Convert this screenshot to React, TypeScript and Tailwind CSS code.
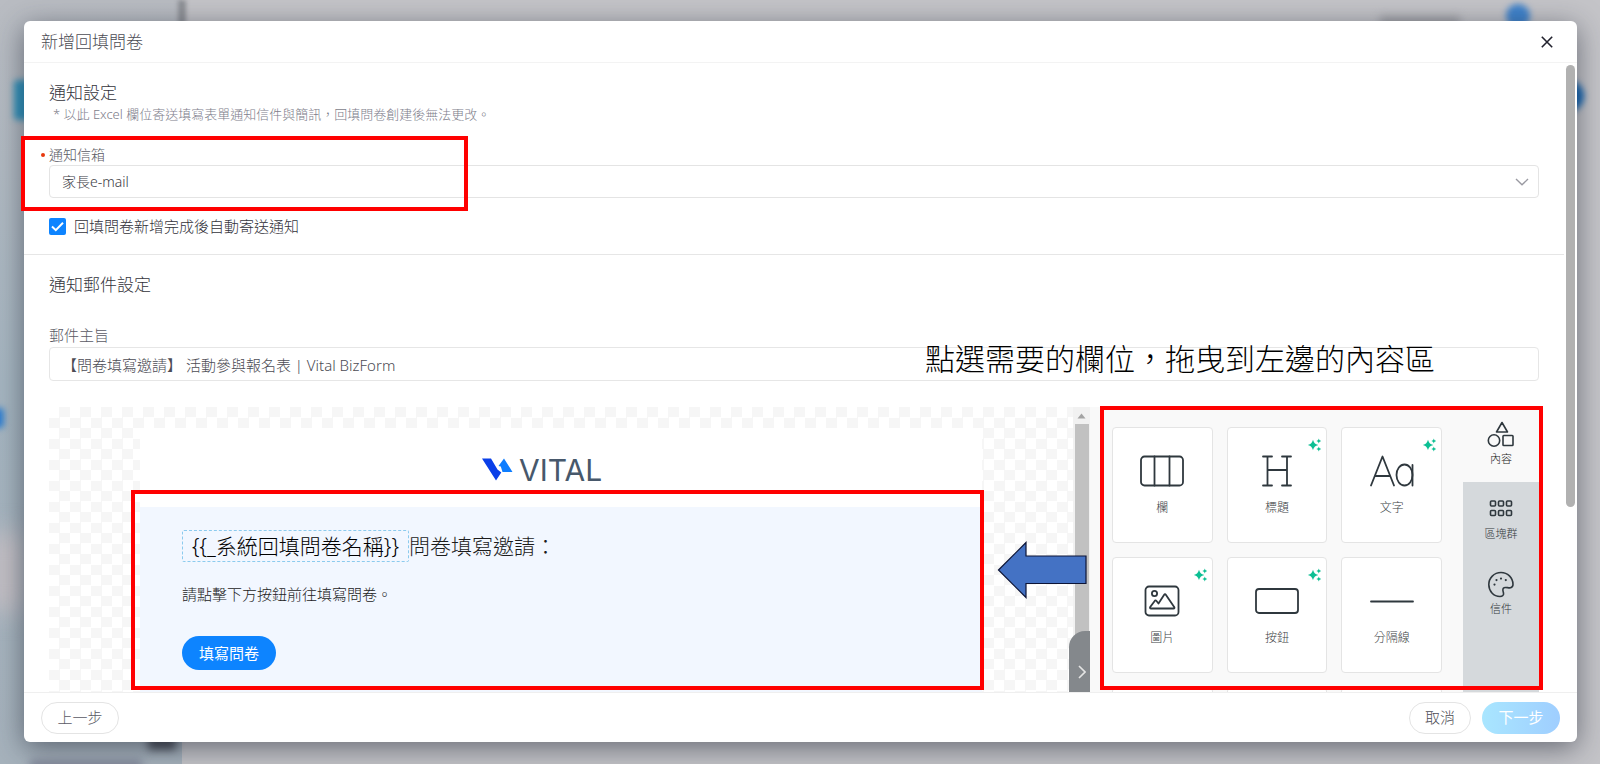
import { ReactNode } from "react";

const Sparkle = () => (
  <svg className="absolute right-1 top-2.5" width="14" height="14" viewBox="0 0 14 14" fill="#0bbf93">
    <path d="M5 1.8C6 5 7 6 10.2 7C7 8 6 9 5 12.2C4 9 3 8 0 7C3 6 4 5 5 1.8Z" />
    <path d="M10.8 0.6C11.300 2.2 11.700 2.600 13.200 3.100C11.700 3.600 11.300 4 10.800 5.600C10.300 4 9.900 3.600 8.400 3.100C9.900 2.600 10.300 2.200 10.800 0.600Z" />
    <path d="M10.8 8.400C11.300 10 11.700 10.400 13.200 10.900C11.700 11.400 11.300 11.800 10.800 13.400C10.300 11.800 9.900 11.400 8.400 10.900C9.900 10.400 10.300 10 10.800 8.400Z" />
  </svg>
);

const Icon = ({ children }: { children: ReactNode }) => (
  <svg width="46" height="34" viewBox="0 0 46 34" fill="none" stroke="#2f383e" strokeWidth="1.8" strokeLinecap="round" strokeLinejoin="round">
    {children}
  </svg>
);

const blocks = [
  {
    name: "欄",
    ai: false,
    icon: (
      <Icon>
        <rect x="2" y="2.5" width="42" height="29" rx="3.5" />
        <path d="M15.5 2.5V31.5M30.5 2.5V31.5" />
      </Icon>
    ),
  },
  {
    name: "標題",
    ai: true,
    icon: (
      <Icon>
        <path d="M9 2.5H18M28 2.5H37M9 31.5H18M28 31.5H37M13.5 2.5V31.5M33 2.5V31.5M13.5 16H33" />
      </Icon>
    ),
  },
  {
    name: "文字",
    ai: true,
    icon: (
      <Icon>
        <path d="M2 31.5L13.5 2.5L25 31.5M6 22H21" />
        <ellipse cx="35.5" cy="21" rx="8" ry="10.500" />
        <path d="M43.500 11V31.5" />
      </Icon>
    ),
  },
  {
    name: "圖片",
    ai: true,
    icon: (
      <Icon>
        <rect x="6.5" y="2.5" width="33" height="29" rx="3.5" />
        <circle cx="15.5" cy="9.5" r="2.6" />
        <path d="M12 24.5H34.5Q36 24.5 35.2 23L27 11Q26 9.5 25 11L19.5 19.5L17.5 17Q16.5 15.8 15.5 17.2L11.2 23Q10.5 24.5 12 24.5Z" />
      </Icon>
    ),
  },
  {
    name: "按鈕",
    ai: true,
    icon: (
      <Icon>
        <rect x="2" y="5" width="42" height="24" rx="3" />
      </Icon>
    ),
  },
  {
    name: "分隔線",
    ai: false,
    icon: (
      <Icon>
        <path d="M2 17.5H44" />
      </Icon>
    ),
  },
];

const tabs = [
  {
    name: "內容",
    icon: (
      <>
        <path d="M15 1.5L20.500 11H9.500Z" />
        <circle cx="7" cy="19.5" r="5.7" />
        <rect x="16" y="14.5" width="10" height="10" rx="0.8" />
      </>
    ),
  },
  {
    name: "區塊群",
    icon: (
      <>
        <rect x="3.5" y="5" width="5" height="5" rx="1" />
        <rect x="11.5" y="5" width="5" height="5" rx="1" />
        <rect x="19.5" y="5" width="5" height="5" rx="1" />
        <rect x="3.5" y="14.5" width="5" height="5" rx="1" />
        <rect x="11.5" y="14.5" width="5" height="5" rx="1" />
        <rect x="19.5" y="14.5" width="5" height="5" rx="1" />
      </>
    ),
  },
  {
    name: "信件",
    icon: (
      <>
        <path d="M26 13.5C26 6.5 20.5 1.5 14 1.5C7 1.5 1.8 7 1.8 13.5C1.8 20 6.5 25.5 13 25.5C15.5 25.5 17 24 16.5 22C15.8 19.5 15 17.5 17 16.7C19 15.8 21.5 17.3 23.5 16.8C25.2 16.3 26 15 26 13.5Z" />
        <path d="M7.5 13.5V13.6M9.5 9V9.1M14 7.5V7.6M18.8 9V9.1" strokeWidth="2.2" />
      </>
    ),
  },
];

// blurred page behind the dialog
const Backdrop = () => (
  <div className="absolute inset-0 overflow-hidden bg-[#c4c4c8]">
    <div className="absolute inset-y-0 left-0 w-[182px] bg-linear-to-b from-[#b9bcc2] via-[#a5b5c0] to-[#a6b2bc]" />
    <div className="absolute left-[178px] top-0 h-6 w-2 bg-[#8e9095] blur-[2px]" />
    <div className="absolute left-[14px] top-[80px] h-10 w-8 rounded bg-[#2f93bd] blur-[3px]" />
    <div className="absolute -left-3 top-[408px] h-5 w-4 rounded bg-[#2f7fd0] blur-[3px]" />
    <div className="absolute -left-3 top-[532px] h-20 w-9 bg-[#c4bfc4] blur-md" />
    <div className="absolute left-[148px] top-[734px] h-4 w-7 bg-[#4c505a] blur-xs" />
    <div className="absolute left-[30px] top-[760px] h-3 w-28 bg-[#82889a] blur-xs" />
    <div className="absolute right-[70px] top-1 size-6 rounded-full bg-[#3f83cc] blur-[3px]" />
    <div className="absolute right-[140px] top-4 h-4 w-20 bg-[#a0a1a6] blur-[4px]" />
    <div className="absolute right-4 top-[80px] size-8 rounded-full bg-[#1568b5] blur-[3px]" />
  </div>
);

const App = () => {
  return (
    <div className="relative h-screen pb-[22px] pl-6 pr-[23px] pt-[21px] font-['Noto_Sans','Noto_Sans_CJK_TC',sans-serif] text-[15px] font-light text-[#33333b]">
      <Backdrop />
      <div role="dialog" aria-label="新增回填問卷" className="relative flex h-full flex-col rounded-md bg-white shadow-[0_6px_28px_rgba(30,34,50,0.55)]">
        <header className="flex h-[42px] shrink-0 items-center justify-between border-b border-[#f3f3f3] pl-[17px] pr-[22px]">
          <h1 className="text-[17px] leading-6 text-[#4c4c54]">新增回填問卷</h1>
          <button type="button" aria-label="關閉" className="flex size-4 items-center justify-center">
            <svg width="12" height="12" viewBox="0 0 12 12" stroke="#22222e" strokeWidth="1.6">
              <path d="M0.8 0.8L11.2 11.2M11.2 0.8L0.8 11.2" />
            </svg>
          </button>
        </header>

        <div className="flex min-h-0 flex-1">
          <main className="flex min-w-0 flex-1 flex-col">
            <section className="border-b border-[#e6e6e6] px-[25px] pb-4 pt-[18px]">
              <h2 className="text-[17px] leading-6">通知設定</h2>
              <p className="pl-1 text-[13px] leading-[18px] text-[#7d7d8a]">* 以此 Excel 欄位寄送填寫表單通知信件與簡訊，回填問卷創建後無法更改。</p>
              <div className="relative mt-[22px]">
                <label htmlFor="mailbox" className="flex items-center text-[14px] leading-5 text-[#5a5a64]">
                  <span className="-ml-2 mr-1 size-1 rounded-full bg-[#e8380d]" />
                  通知信箱
                </label>
                <select id="mailbox" className="h-[33px] w-full appearance-none rounded border border-[#e4e4e4] bg-white pl-3 text-[14px] text-[#3b3b44]">
                  <option>家長e-mail</option>
                </select>
                <svg className="pointer-events-none absolute bottom-3 right-2.5" width="14" height="8" viewBox="0 0 14 8" fill="none" stroke="#9a9aa2" strokeWidth="1.4">
                  <path d="M1 1L7 6.8L13 1" />
                </svg>
                <div className="pointer-events-none absolute -left-7 -top-[9px] h-[75px] w-[447px] border-4 border-[#ff0000]" />
              </div>
              <label className="mt-4 flex items-center gap-2 text-[15px] leading-6">
                <span className="relative flex size-[17px]">
                  <input type="checkbox" defaultChecked className="size-[17px] appearance-none rounded-xs bg-[#0d84ff]" />
                  <svg className="pointer-events-none absolute inset-0" width="17" height="17" viewBox="0 0 17 17" fill="none" stroke="white" strokeWidth="2">
                    <path d="M3 8.5L6.8 12.2L14 4.8" />
                  </svg>
                </span>
                回填問卷新增完成後自動寄送通知
              </label>
            </section>

            <section className="flex min-h-0 flex-1 flex-col px-[25px] pt-[18px]">
              <h2 className="text-[17px] leading-6">通知郵件設定</h2>
              <div className="relative mt-[26px] shrink-0">
                <label htmlFor="subject" className="block leading-6 text-[#5a5a64]">郵件主旨</label>
                <input
                  id="subject"
                  type="text"
                  defaultValue="【問卷填寫邀請】 活動參與報名表 | Vital BizForm"
                  className="h-[34px] w-full rounded border border-[#e6e6e6] px-3 text-[15px] text-[#4c4c54]"
                />
                <p className="pointer-events-none absolute right-[104px] top-4 text-[30px] leading-10 text-black">點選需要的欄位，拖曳到左邊的內容區</p>
              </div>

              <div className="relative mt-[26px] flex min-h-0 flex-1">
                {/* mail preview */}
                <div className="relative flex min-w-0 flex-1">
                  <div className="flex min-w-0 flex-1 flex-col bg-[conic-gradient(#f6f6f6_25%,#fff_0_50%,#f6f6f6_0_75%,#fff_0)] bg-size-[21px_21px] px-[91px] pt-[21px]">
                    <div className="relative flex min-h-0 flex-1 flex-col bg-white">
                      <div className="flex h-[79px] shrink-0 items-center justify-center gap-1.5 pb-5 pr-5 pt-6">
                        <svg width="31" height="23" viewBox="0 0 31 23">
                          <path d="M0 0.5H9L15.5 11.5L19.3 14.5L14 22.5Z" fill="#0a3fe8" />
                          <path d="M16.5 8L22 0.5L30.5 14H20.5L18.8 8.5Z" fill="#0d7dff" />
                        </svg>
                        <span className="w-[101px] font-['Inter',sans-serif] text-[30px] font-normal leading-8 text-[#47586b]">VITAL</span>
                      </div>
                      <div className="min-h-0 flex-1 bg-[#f2f7ff] pl-[42px] pt-[23px] text-[#1c1c1c]">
                        <p className="flex items-center text-[21px] leading-7">
                          <span className="rounded-xs border border-dashed border-[#8ccbee] px-[9px] py-px text-black">{"{{_系統回填問卷名稱}}"}</span>
                          問卷填寫邀請：
                        </p>
                        <p className="mt-5 leading-6">請點擊下方按鈕前往填寫問卷。</p>
                        <button type="button" className="mt-[30px] h-[34px] rounded-full bg-[#0d84ff] px-[17px] font-normal text-white">填寫問卷</button>
                      </div>
                      <div className="pointer-events-none absolute -left-[9px] -right-[2px] bottom-[2px] top-[62px] border-4 border-[#ff0000]" />
                    </div>
                  </div>
                  <div className="flex w-[17px] flex-col items-center bg-[#f1f1f1]">
                    <svg className="my-[5px]" width="9" height="7" viewBox="0 0 9 7" fill="#a3a3a3">
                      <path d="M0.5 6.5L4.5 1.5L8.5 6.5Z" />
                    </svg>
                    <div className="w-3.5 flex-1 bg-[#c1c1c1]" />
                  </div>
                  <button type="button" aria-label="收合" className="absolute bottom-0 right-0 flex h-[61px] w-[21px] items-center justify-end rounded-tl-2xl bg-[#84888c] pr-1 pt-5">
                    <svg width="8" height="14" viewBox="0 0 8 14" fill="none" stroke="#e4e4e4" strokeWidth="1.6">
                      <path d="M1 1L7 7L1 13" />
                    </svg>
                  </button>
                  <svg className="pointer-events-none absolute bottom-[93px] right-[3px]" width="90" height="58" viewBox="0 0 90 58">
                    <path d="M1.5 29L29 1.5V15H89V42.5H29V56.5Z" fill="#4472c4" stroke="#0c1436" strokeWidth="1.2" />
                  </svg>
                </div>

                {/* block picker */}
                <div className="flex min-h-0 w-[449px] bg-[#f9f9f9]">
                  <div className="grid flex-1 grid-cols-3 content-start gap-3.5 overflow-hidden pl-[22px] pr-[21px] pt-5">
                    {blocks.map((block) => (
                      <button key={block.name} type="button" className="relative flex h-[116px] flex-col items-center gap-2.5 rounded border border-[#e4e4e4] bg-white pt-[26px] text-[12px] leading-5 text-[#3c4245]">
                        {block.icon}
                        {block.name}
                        {block.ai && <Sparkle />}
                      </button>
                    ))}
                    <div className="h-4 rounded-t border border-[#e4e4e4] bg-white" />
                    <div className="h-4 rounded-t border border-[#e4e4e4] bg-white" />
                    <div className="h-4 rounded-t border border-[#e4e4e4] bg-white" />
                  </div>
                  <div className="flex w-[76px] flex-col bg-[#d5d9dc]">
                    {tabs.map((tab, i) => (
                      <button
                        key={tab.name}
                        type="button"
                        className={`flex h-[75px] flex-col items-center pt-3.5 text-[11px] leading-5 ${i === 0 ? "bg-[#f9f9f9] text-[#222]" : "text-[#33383b]"}`}
                      >
                        <svg width="28" height="28" viewBox="0 0 28 28" fill="none" stroke="#2f383e" strokeWidth="1.6" strokeLinecap="round" strokeLinejoin="round">
                          {tab.icon}
                        </svg>
                        {tab.name}
                      </button>
                    ))}
                  </div>
                </div>
                <div className="pointer-events-none absolute -right-1 -top-px bottom-[2px] w-[443px] border-4 border-[#ff0000]" />
              </div>
            </section>
          </main>
          <div className="w-[13px] px-0.5 pt-0.5">
            <div className="h-[442px] w-[9px] rounded-full bg-[#b1b1b1]" />
          </div>
        </div>

        <footer className="flex h-[50px] shrink-0 items-center gap-[11px] border-t border-[#efefef] px-[17px]">
          <button type="button" className="mr-auto h-8 w-[78px] rounded-full border border-[#e4e4e4] text-[#5a5a64]">上一步</button>
          <button type="button" className="h-8 w-[62px] rounded-full border border-[#e4e4e4] text-[#4c4c54]">取消</button>
          <button type="button" className="h-8 w-[78px] rounded-full bg-linear-to-r from-[#a9e6ff] to-[#9fceff] font-normal text-white">下一步</button>
        </footer>
      </div>
    </div>
  );
};
export default App;
